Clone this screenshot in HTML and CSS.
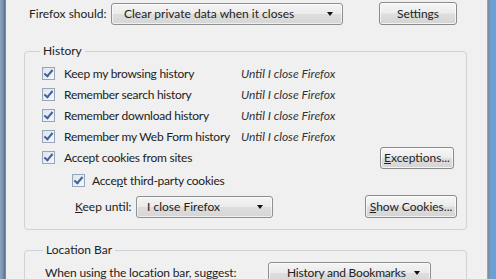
FILE: index.html
```html
<!DOCTYPE html>
<html lang="en">
<head>
    <meta charset="UTF-8">
    <title>Privacy Options</title>
    <link rel="stylesheet" href="styles.css">
</head>
<body>
    <div class="frame-left"></div>

    <div class="content">
        <div class="top-row">
            <span class="label">Firefox should:</span>
            <div class="dropdown dropdown-main">
                <span>Clear private data when it closes</span>
                <span class="arrow"></span>
            </div>
            <button class="button btn-settings">Settings</button>
        </div>

        <fieldset class="group group-history">
            <legend>History</legend>

            <div class="row">
                <label class="check-label"><span class="checkbox"></span>Keep my browsing history</label>
                <span class="until">Until I close Firefox</span>
            </div>
            <div class="row">
                <label class="check-label"><span class="checkbox"></span>Remember search history</label>
                <span class="until">Until I close Firefox</span>
            </div>
            <div class="row">
                <label class="check-label"><span class="checkbox"></span>Remember download history</label>
                <span class="until">Until I close Firefox</span>
            </div>
            <div class="row">
                <label class="check-label"><span class="checkbox"></span>Remember my Web Form history</label>
                <span class="until">Until I close Firefox</span>
            </div>
            <div class="row">
                <label class="check-label"><span class="checkbox"></span>Accept cookies from sites</label>
                <button class="button btn-exceptions"><u>E</u>xceptions...</button>
            </div>
            <div class="row row-sub">
                <label class="check-label"><span class="checkbox"></span>Acce<u>p</u>t third-party cookies</label>
            </div>
            <div class="row row-keep">
                <span class="keep-label"><u>K</u>eep until:</span>
                <div class="dropdown dropdown-keep">
                    <span>I close Firefox</span>
                    <span class="arrow"></span>
                </div>
                <button class="button btn-cookies"><u>S</u>how Cookies...</button>
            </div>
        </fieldset>

        <fieldset class="group group-location">
            <legend>Location Bar</legend>
            <div class="row">
                <span class="suggest-label">When using the location bar, suggest:</span>
                <div class="dropdown dropdown-suggest">
                    <span>History and Bookmarks</span>
                    <span class="arrow"></span>
                </div>
            </div>
        </fieldset>
    </div>

    <div class="frame-right"></div>
</body>
</html>
```

FILE: styles.css
```css
/* Base */
body {
    margin: 0;
    height: 279px;
    overflow: hidden;
    display: flex;
    background-color: #f0f0f0;
    font-family: 'Lato', 'Noto Sans', sans-serif;
    font-size: 12px;
    line-height: 16px;
    color: #222;
    white-space: nowrap;
}

/* Window frame */
.frame-left {
    width: 6px;
    flex-shrink: 0;
    background: linear-gradient(to right, #8da3bd 0, #7890ae 3px, #55708f 5px, #9aa9b9 6px);
}
.frame-right {
    width: 9px;
    flex-shrink: 0;
    background: linear-gradient(to right, #a3acb5 0, #7a8796 2px, #6f9fd0 3px, #64a4dc 100%);
}

.content {
    flex: 1;
    padding: 2px 20px 0 18px;
}

/* Top row */
.top-row {
    display: flex;
    align-items: center;
    height: 23px;
}
.top-row .label {
    margin-left: 5px;
    width: 82px;
}

/* Buttons */
.button {
    font-family: inherit;
    font-size: 12px;
    color: #222;
    height: 23px;
    padding: 0;
    border: 1px solid #8a8a8a;
    border-radius: 3px;
    background: linear-gradient(to bottom, #f6f6f6 0%, #ececec 48%, #dedede 52%, #d4d4d4 100%);
    box-shadow: inset 0 0 0 1px rgba(255, 255, 255, 0.7);
}
.btn-settings {
    width: 78px;
    margin-left: auto;
    margin-right: 10px;
}
.btn-exceptions {
    width: 74px;
    height: 22px;
    margin-left: auto;
    margin-right: 12px;
}
.btn-cookies {
    width: 92px;
    margin-left: auto;
    margin-right: 9px;
}

/* Dropdowns */
.dropdown {
    display: flex;
    align-items: center;
    justify-content: space-between;
    box-sizing: border-box;
    height: 22px;
    border: 1px solid #8e8f8f;
    border-radius: 3px;
    background: linear-gradient(to bottom, #f4f4f4 0%, #ebebeb 48%, #dddddd 52%, #d6d6d6 100%);
    box-shadow: inset 0 0 0 1px rgba(255, 255, 255, 0.6);
}
.arrow {
    width: 0;
    height: 0;
    border-left: 3px solid transparent;
    border-right: 3px solid transparent;
    border-top: 4px solid #111;
}
.dropdown-main {
    width: 232px;
    padding: 0 9px 0 12px;
}
.dropdown-keep {
    width: 137px;
    padding: 0 9px 0 10px;
}
.dropdown-suggest {
    width: 163px;
    padding: 0 10px 0 18px;
    letter-spacing: -0.2px;
}

/* Group boxes */
.group {
    margin: 0;
    border: 1px solid #cdd3d8;
    border-radius: 4px;
    min-width: 0;
}
.group legend {
    padding: 0 3px;
    margin-left: -2px;
    line-height: 16px;
}
.group-history {
    margin-top: 18px;
    padding: 4px 0 11px 17px;
}
.group-location {
    margin-top: 12px;
    padding: 4px 0 20px 20px;
}

/* Rows */
.row {
    display: flex;
    align-items: center;
    height: 21px;
}
.check-label {
    display: flex;
    align-items: center;
    width: 199px;
    letter-spacing: -0.25px;
}
.checkbox {
    width: 11px;
    height: 11px;
    margin-right: 9px;
    border: 1px solid #97a6b6;
    background: linear-gradient(135deg, #dde4ec 0%, #f6f7f9 100%);
    position: relative;
    flex-shrink: 0;
}
.checkbox::after {
    content: "";
    position: absolute;
    left: 3px;
    top: 0;
    width: 3px;
    height: 7px;
    border-right: 2px solid #41609e;
    border-bottom: 2px solid #41609e;
    transform: rotate(40deg);
}
.until {
    font-style: italic;
    color: #333;
}

.row-sub {
    height: 25px;
    padding-left: 30px;
}
.row-sub .checkbox {
    margin-right: 7px;
}
.row-keep {
    height: 23px;
    margin-top: 2px;
    padding-left: 33px;
}
.keep-label {
    width: 61px;
}
.suggest-label {
    width: 223px;
    letter-spacing: -0.15px;
}
```
